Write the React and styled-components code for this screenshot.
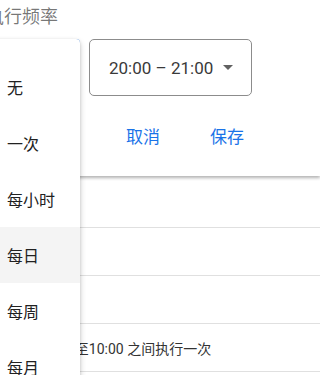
import React from "react";
import styled, { createGlobalStyle } from "styled-components";

const GlobalStyle = createGlobalStyle`
  html, body {
    margin: 0;
    padding: 0;
    background: #fff;
    overflow: hidden;
  }
  body {
    font-family: Roboto, "Noto Sans CJK SC", sans-serif;
  }
`;

const frequencies = ["无", "一次", "每小时", "每日", "每周", "每月"];
const rows = ["", "", "", "每天 09:00 至10:00 之间执行一次", ""];

export default function App() {
  return (
    <React.Fragment>
      <GlobalStyle />
      <Page>
        <Card>
          <Label>执行频率</Label>
          <SelectRow>
            <FreqSelect focused />
            <TimeSelect>
              <span>20:00 – 21:00</span>
              <Caret />
            </TimeSelect>
            <Menu>
              {frequencies.map((f) => (
                <MenuItem key={f} active={f === "每日"}>
                  {f}
                </MenuItem>
              ))}
            </Menu>
          </SelectRow>
          <Actions>
            <TextButton>取消</TextButton>
            <TextButton>保存</TextButton>
          </Actions>
        </Card>
        <List>
          {rows.map((r, i) => (
            <Row key={i}>{r}</Row>
          ))}
        </List>
      </Page>
    </React.Fragment>
  );
}

const Page = styled.div`
  margin-left: -26px;
  width: calc(100% + 26px);
  height: 375px;
  overflow: hidden;
`;

const Card = styled.div`
  background: #fff;
  padding: 5px 0 23px 16px;
  box-shadow: 0 2px 3px rgba(0, 0, 0, 0.3);
  position: relative;
  z-index: 1;
`;

const Label = styled.div`
  font-size: 18px;
  line-height: 24px;
  color: rgba(0, 0, 0, 0.54);
  margin: 0 0 10px -4px;
`;

const SelectRow = styled.div`
  position: relative;
  display: flex;
  gap: 9px;
`;

const FreqSelect = styled.div`
  width: 90px;
  height: 57px;
  box-sizing: border-box;
  border: 2px solid ${(p) => (p.focused ? "#1a73e8" : "#888")};
  border-radius: 4px;
`;

const TimeSelect = styled.div`
  width: 163px;
  height: 57px;
  box-sizing: border-box;
  border: 1px solid #8c8c8c;
  border-radius: 5px;
  display: flex;
  align-items: center;
  justify-content: space-between;
  padding: 0 18px 0 19px;
  font-size: 17px;
  color: #3a3a3a;
`;

const Caret = styled.span`
  width: 0;
  height: 0;
  border-left: 5px solid transparent;
  border-right: 5px solid transparent;
  border-top: 5px solid #616161;
`;

const Menu = styled.div`
  position: absolute;
  top: 0;
  left: 0;
  width: 90px;
  height: 360px;
  padding-top: 20px;
  background: #fff;
  border-radius: 4px;
  box-shadow: 0 3px 6px rgba(0, 0, 0, 0.2), 0 1px 3px rgba(0, 0, 0, 0.14);
  z-index: 5;
`;

const MenuItem = styled.div`
  height: 56px;
  display: flex;
  align-items: center;
  padding-left: 17px;
  font-size: 16px;
  color: #212121;
  background: ${(p) => (p.active ? "#f4f4f4" : "transparent")};
`;

const Actions = styled.div`
  display: flex;
  gap: 18px;
  margin-top: 21px;
  padding-left: 120px;
`;

const TextButton = styled.button`
  border: none;
  background: none;
  padding: 0 16px;
  height: 36px;
  font-family: inherit;
  font-size: 17px;
  color: #1a73e8;
`;

const List = styled.div`
  margin-top: 4px;
`;

const Row = styled.div`
  height: 47px;
  border-bottom: 1px solid #e0e0e0;
  display: flex;
  align-items: center;
  padding-left: 31px;
  font-size: 14px;
  color: #333;
  white-space: nowrap;
`;
